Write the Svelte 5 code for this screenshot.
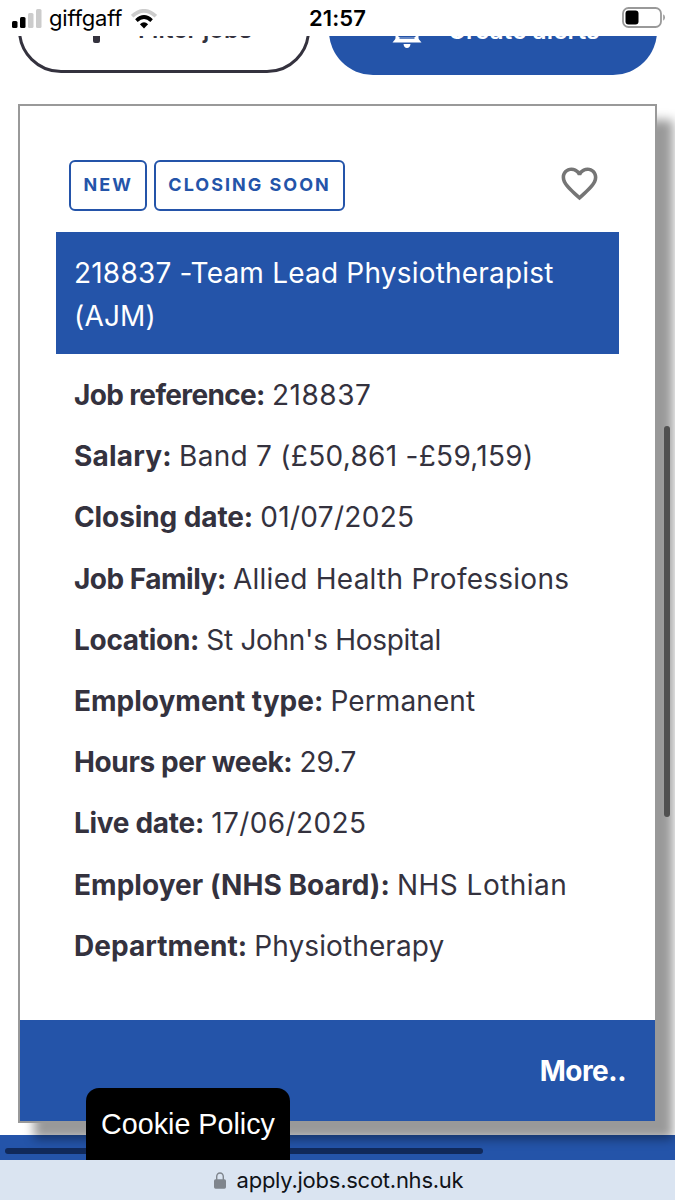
<script lang="ts">
  interface Detail {
    label: string;
    value: string;
    labelSpacing?: number;
    valueSpacing?: number;
  }

  const tags = ['New', 'Closing soon'];

  const details: Detail[] = [
    { label: 'Job reference:', value: '218837', labelSpacing: -0.64, valueSpacing: 0.5 },
    { label: 'Salary:', value: 'Band 7 (£50,861 -£59,159)', labelSpacing: 0.2, valueSpacing: 0.28 },
    { label: 'Closing date:', value: '01/07/2025', labelSpacing: -0.1, valueSpacing: 0.3 },
    { label: 'Job Family:', value: 'Allied Health Professions', labelSpacing: -0.5, valueSpacing: 0.25 },
    { label: 'Location:', value: "St John's Hospital", labelSpacing: -0.3, valueSpacing: -0.3 },
    { label: 'Employment type:', value: 'Permanent', valueSpacing: 0.1 },
    { label: 'Hours per week:', value: '29.7', labelSpacing: -0.38, valueSpacing: -0.1 },
    { label: 'Live date:', value: '17/06/2025', labelSpacing: -0.3, valueSpacing: 0.4 },
    { label: 'Employer (NHS Board):', value: 'NHS Lothian', labelSpacing: 0.05, valueSpacing: 0.45 },
    { label: 'Department:', value: 'Physiotherapy', labelSpacing: 0.05, valueSpacing: 0.1 },
  ];
</script>

<div class="phone">
  <header class="status">
    <div class="carrier">
      <svg width="30" height="19" viewBox="0 0 30 19">
        <rect x="0" y="12" width="5.5" height="7" rx="1.5" />
        <rect x="8" y="8" width="5.5" height="11" rx="1.5" />
        <rect x="16" y="4" width="5.5" height="15" rx="1.5" fill="#ccc" />
        <rect x="24" y="0" width="5.5" height="19" rx="1.5" fill="#ccc" />
      </svg>
      <span class="network">giffgaff</span>
      <svg class="wifi" width="26" height="20" viewBox="0 0 26 20" fill="none">
        <path d="M1.2 7.2Q13 -3.6 24.8 7.2" stroke="#ccc" stroke-width="3.6" />
        <path d="M5.4 11.6Q13 4.4 20.6 11.6" stroke="#000" stroke-width="3.6" />
        <path d="M8.9 15.2Q13 11.4 17.1 15.2L13 19.5Z" fill="#000" />
      </svg>
    </div>
    <span class="time">21:57</span>
    <svg class="battery" width="44" height="21" viewBox="0 0 44 21">
      <rect x="1" y="1" width="38" height="19" rx="5.5" fill="none" stroke="#999" stroke-width="1.8" />
      <rect x="3.5" y="3.5" width="13" height="14" rx="3" />
      <path d="M41.2 7.3Q43 8.4 43 10.5T41.2 13.7Z" fill="#999" />
    </svg>
  </header>

  <main class="viewport">
    <div class="actions">
      <button class="filter">
        <svg width="30" height="36" viewBox="0 0 30 36" fill="#34323e">
          <rect x="11" y="0" width="7" height="8" rx="2" />
          <rect x="0" y="13" width="29" height="6" rx="2" />
          <rect x="11" y="24" width="7" height="12" rx="2" />
        </svg>
        <span>Filter jobs</span>
      </button>
      <button class="alerts">
        <svg width="30" height="37" viewBox="0 0 30 37">
          <path
            d="M5 30V17C5 10 9 6 15 6s10 4 10 11v13"
            fill="none"
            stroke="#fff"
            stroke-width="3"
          />
          <path d="M12 2h6v5h-6zM5 26h20l4.5 5.5h-29zM11.5 33h7q-.5 4-3.5 4t-3.5-4z" fill="#fff" />
          <path d="M7.5 26.3h15v1.4h-15z" fill="#2454a9" />
        </svg>
        <span>Create alerts</span>
      </button>
    </div>

    <article class="card">
      <div class="tags">
        {#each tags as tag}
          <span class="tag">{tag}</span>
        {/each}
        <svg class="heart" width="43" height="43" viewBox="0 0 24 24" fill="#757575">
          <path
            d="M16.5 3c-1.74 0-3.41.81-4.5 2.09C10.91 3.81 9.24 3 7.5 3 4.42 3 2 5.42 2 8.5c0 3.78 3.4 6.86 8.55 11.54L12 21.35l1.45-1.32C18.6 15.36 22 12.28 22 8.5 22 5.42 19.58 3 16.5 3zm-4.4 15.55l-.1.1-.1-.1C7.14 14.24 4 11.39 4 8.5 4 6.5 5.5 5 7.5 5c1.54 0 3.04.99 3.57 2.36h1.87C13.46 5.99 14.96 5 16.5 5c2 0 3.5 1.5 3.5 3.5 0 2.89-3.14 5.74-7.9 10.05z"
          />
        </svg>
      </div>
      <h2>218837 -Team Lead Physiotherapist (AJM)</h2>
      <div class="details">
        {#each details as { label, value, labelSpacing = 0, valueSpacing = 0 }}
          <p>
            <strong style="letter-spacing: {labelSpacing}px">{label}</strong>
            <span style="letter-spacing: {valueSpacing}px">{value}</span>
          </p>
        {/each}
      </div>
      <footer class="more">More..</footer>
    </article>

    <div class="page-footer"></div>
    <div class="scroll-y"></div>
    <div class="scroll-x"></div>
    <div class="cookie">Cookie Policy</div>
  </main>

  <div class="address">
    <svg width="12" height="17" viewBox="0 0 12 17">
      <path d="M2.7 8V4.6a3.3 3.6 0 0 1 6.6 0V8" fill="none" stroke="#7f858d" stroke-width="1.4" />
      <rect x="0" y="7.3" width="12" height="9.4" rx="1.6" fill="#7f858d" />
    </svg>
    <span>apply.jobs.scot.nhs.uk</span>
  </div>
</div>

<style>
  :global(body) {
    margin: 0;
  }
  .phone {
    display: flex;
    flex-direction: column;
    width: 675px;
    height: 1200px;
    overflow: hidden;
    background: #fff;
    color: #34323e;
    font-family: Inter, 'Liberation Sans', sans-serif;
  }
  .status {
    display: grid;
    grid-template-columns: 1fr auto 1fr;
    align-items: center;
    flex: none;
    height: 36px;
    box-sizing: border-box;
    padding: 0 12px;
    color: #000;
  }
  .carrier {
    display: flex;
    align-items: center;
  }
  .network {
    margin: 0 9px 0 7px;
    font-size: 22px;
    line-height: 32px;
    letter-spacing: -0.2px;
  }
  .wifi {
    margin-top: 1px;
  }
  .time {
    font-size: 22px;
    font-weight: 600;
    letter-spacing: 0.1px;
  }
  .battery {
    justify-self: end;
    margin: -1px -3px 0 0;
  }
  .viewport {
    position: relative;
    flex: 1;
    min-height: 0;
    overflow: hidden;
  }
  .actions {
    display: flex;
    align-items: flex-start;
    gap: 19px;
    height: 68px;
    padding: 0 18px;
  }
  button {
    display: flex;
    align-items: center;
    box-sizing: border-box;
    border-radius: 44px;
    font-family: inherit;
    font-size: 24px;
    font-weight: 600;
  }
  .filter {
    gap: 26px;
    width: 292px;
    height: 86px;
    margin-top: -49px;
    padding: 0 0 0 61px;
    border: 3px solid #34323e;
    background: #fff;
    color: #34323e;
  }
  .filter svg {
    margin-top: -11px;
  }
  .filter span {
    margin-top: -1px;
  }
  .alerts {
    gap: 26px;
    width: 328px;
    height: 88px;
    margin-top: -49px;
    padding: 0 0 0 63px;
    border: 0;
    background: #2454a9;
    color: #fff;
  }
  .alerts svg {
    margin-top: -4px;
  }
  .alerts span {
    margin-top: -1px;
    letter-spacing: 0.2px;
  }
  .card {
    position: relative;
    z-index: 1;
    display: flex;
    flex-direction: column;
    box-sizing: border-box;
    width: 639px;
    height: 1019px;
    margin-left: 18px;
    border: 2px solid #999;
    background: #fff;
    box-shadow: 16px 16px 10px rgba(0, 0, 0, 0.4);
  }
  .tags {
    display: flex;
    align-items: flex-start;
    gap: 7px;
    height: 72px;
    padding: 54px 54px 0 49px;
  }
  .tag {
    box-sizing: border-box;
    height: 51px;
    padding: 0 12px 0 12.5px;
    border: 2px solid #2454a9;
    border-radius: 6px;
    color: #2454a9;
    font-size: 18px;
    font-weight: 650;
    line-height: 46px;
    letter-spacing: 2px;
    text-transform: uppercase;
  }
  .heart {
    margin: 2px 0 0 auto;
  }
  h2 {
    margin: 0 36px;
    padding: 20px 18px 16px;
    background: #2454a9;
    color: #fff;
    font-size: 28px;
    font-weight: 400;
    line-height: 43px;
    letter-spacing: 0.2px;
  }
  .details {
    flex: 1;
    padding: 20px 0 0 54px;
  }
  p {
    margin: 0 0 18px;
    font-size: 28px;
    font-weight: 400;
    line-height: 43.2px;
    white-space: nowrap;
  }
  p span {
    margin-left: -0.7px;
  }
  strong {
    font-weight: 700;
  }
  .more {
    height: 101px;
    padding-right: 29px;
    background: #2454a9;
    color: #fff;
    font-size: 28px;
    font-weight: 700;
    line-height: 103px;
    letter-spacing: -0.5px;
    text-align: right;
  }
  .page-footer {
    height: 60px;
    margin-top: 12px;
    background: #2454a9;
  }
  .scroll-y,
  .scroll-x,
  .cookie {
    position: absolute;
    z-index: 2;
  }
  .scroll-y {
    top: 390px;
    right: 5px;
    width: 6px;
    height: 391px;
    border-radius: 3px;
    background: #505050;
  }
  .scroll-x {
    bottom: 6px;
    left: 5px;
    width: 478px;
    height: 6px;
    border-radius: 3px;
    background: #10295a;
  }
  .cookie {
    bottom: 0;
    left: 86px;
    width: 204px;
    height: 72px;
    border-radius: 13px 13px 0 0;
    background: #000;
    color: #fff;
    font-family: 'Liberation Sans', Arial, sans-serif;
    font-size: 28.7px;
    line-height: 73px;
    text-align: center;
  }
  .address {
    display: flex;
    align-items: center;
    justify-content: center;
    gap: 11px;
    flex: none;
    height: 40px;
    padding-left: 2px;
    background: #dae4f1;
    color: #101318;
    font-size: 22px;
    letter-spacing: -0.25px;
  }
</style>
